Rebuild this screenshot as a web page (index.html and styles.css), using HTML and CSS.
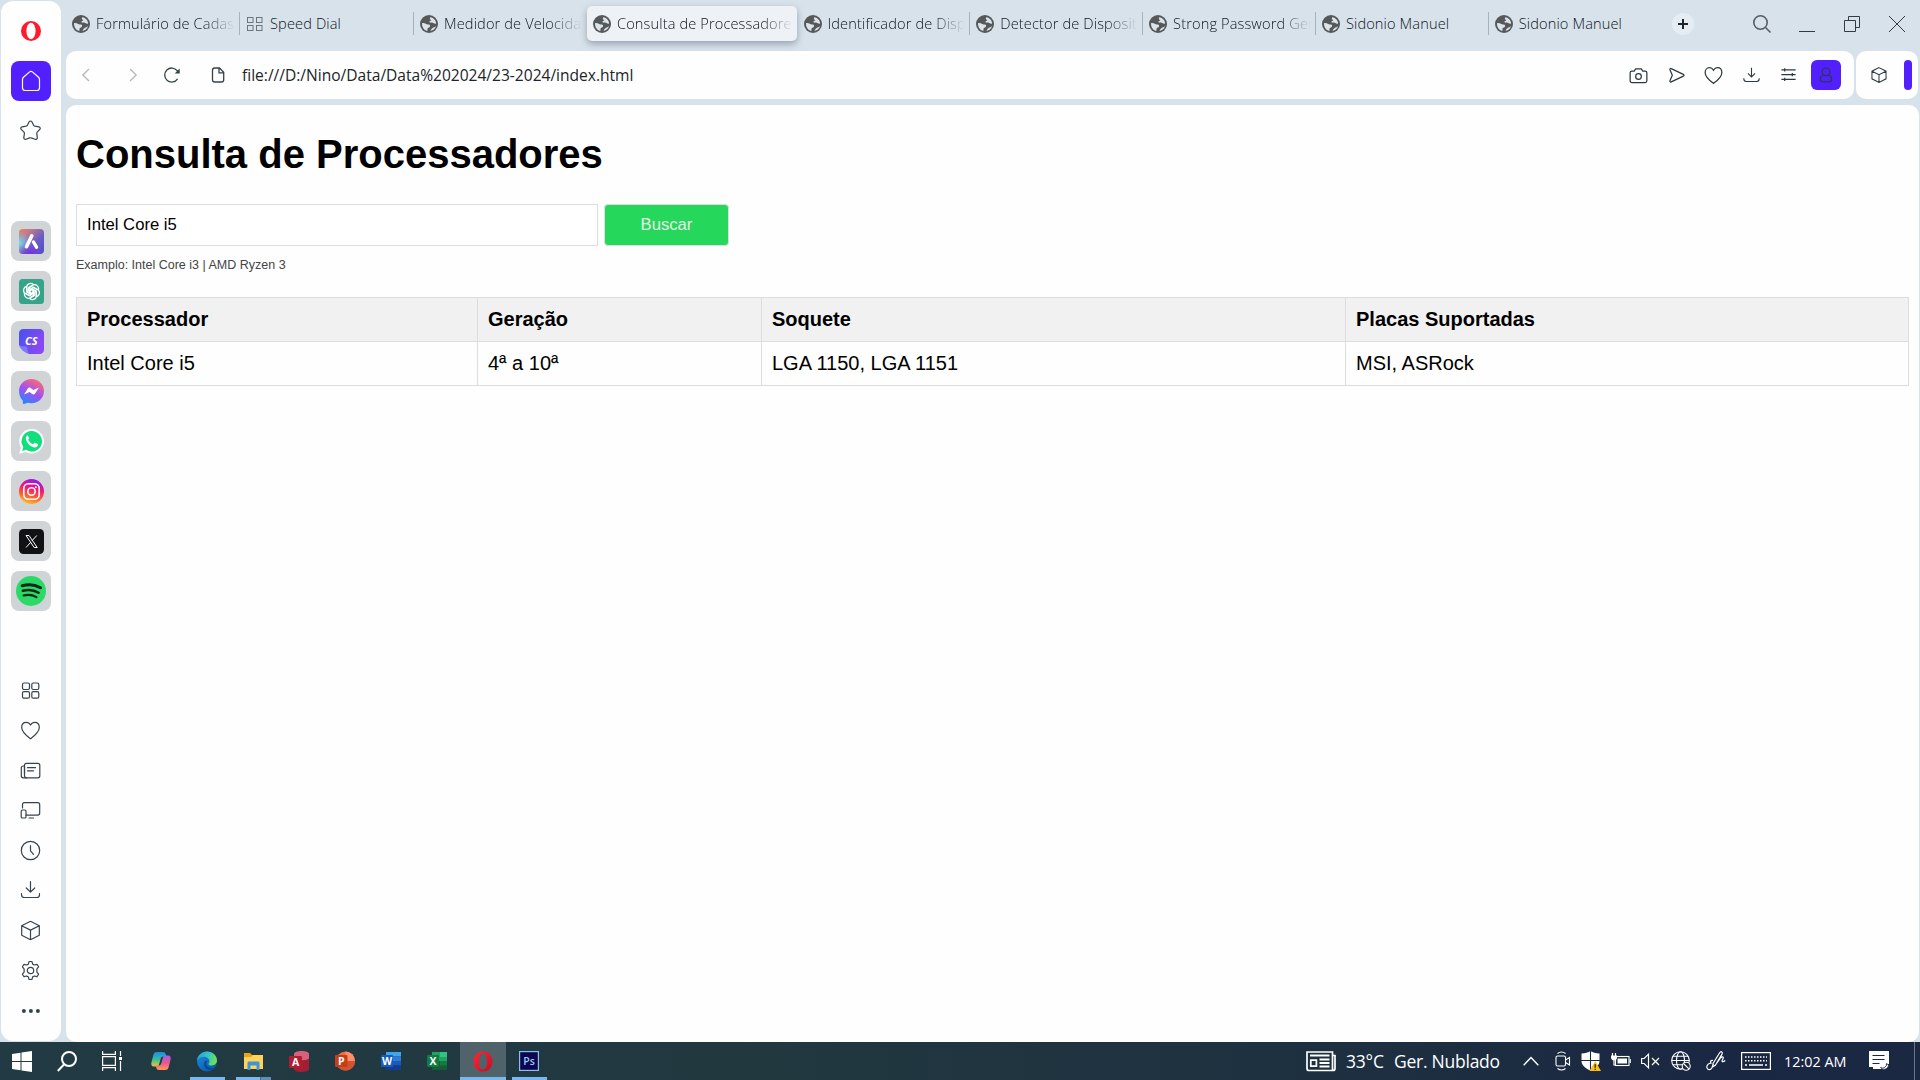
FILE: index.html
```html
<!DOCTYPE html>
<html lang="pt">
<head>
<meta charset="utf-8">
<title>Consulta de Processadores</title>
<link rel="stylesheet" href="styles.css">
</head>
<body>
<svg class="defs" aria-hidden="true">
  <defs>
    <linearGradient id="gAria" x1="0" y1="0" x2="1" y2="1"><stop offset="0" stop-color="#f5804f"/><stop offset=".25" stop-color="#c07a8c"/><stop offset=".6" stop-color="#6a5cc4"/><stop offset="1" stop-color="#4b4fc9"/></linearGradient>
    <radialGradient id="gAria2" cx="0" cy=".55" r=".5"><stop offset="0" stop-color="#6fe0f2"/><stop offset="1" stop-color="#6fc0f2" stop-opacity="0"/></radialGradient>
    <radialGradient id="gAria3" cx=".45" cy="1" r=".5"><stop offset="0" stop-color="#7a2fe0"/><stop offset="1" stop-color="#7a3fd8" stop-opacity="0"/></radialGradient>
    <linearGradient id="gCs" x1="0" y1="0" x2="1" y2=".5"><stop offset="0" stop-color="#4553ea"/><stop offset="1" stop-color="#8a48f5"/></linearGradient>
    <linearGradient id="gMsg" x1=".2" y1="1" x2=".7" y2="0"><stop offset="0" stop-color="#1a8cff"/><stop offset=".5" stop-color="#a050f0"/><stop offset="1" stop-color="#ff6a78"/></linearGradient>
    <linearGradient id="gIg" x1=".3" y1="1" x2=".6" y2="0"><stop offset="0" stop-color="#ffc423"/><stop offset=".35" stop-color="#ff5a30"/><stop offset=".65" stop-color="#f5127c"/><stop offset="1" stop-color="#8a1cf0"/></linearGradient>
    <linearGradient id="gEdge" x1="0" y1="0" x2="1" y2=".3"><stop offset="0" stop-color="#1f9de0"/><stop offset=".6" stop-color="#35c7c4"/><stop offset="1" stop-color="#6be05a"/></linearGradient>
    <linearGradient id="gEdge2" x1="0" y1="0" x2=".8" y2="1"><stop offset="0" stop-color="#1b8fdc"/><stop offset="1" stop-color="#0b57a8"/></linearGradient>
    <linearGradient id="gCopA" x1="0" y1="0" x2="0" y2="1"><stop offset="0" stop-color="#1e8be8"/><stop offset=".5" stop-color="#2fc09a"/><stop offset="1" stop-color="#f2c531"/></linearGradient>
    <linearGradient id="gCopB" x1="0" y1="0" x2="0" y2="1"><stop offset="0" stop-color="#a55ee8"/><stop offset=".5" stop-color="#e8558f"/><stop offset="1" stop-color="#ff9a55"/></linearGradient>
    <linearGradient id="gOp" x1="0" y1="0" x2="1" y2="1"><stop offset="0" stop-color="#ff2638"/><stop offset="1" stop-color="#c20f22"/></linearGradient>
  </defs>
  <symbol id="globe" viewBox="0 0 18 18"><circle cx="9" cy="9" r="9" fill="#56585a"/><path d="M10.4 2.200C13.600 2.800 16 5.500 16.100 8.400c-.8.500-1.700.4-2.300-.1-.8-.8-1.900-1-3-.7-.9.2-1.500-.2-1.300-1 .1-.7.8-.9 1.600-.9.300-.8-.2-1.100-.9-1.300-.6-.5-.4-1.600.200-2.200zM2 8.200c1.500-.3 3 .1 4.200.7.9.5 2 .4 2.900.7 1.200.4 1.300 1.900.4 2.600-.9.600-1.900.500-2 1.600-.1.900.200 1.500-.3 2.200C4 15.100 1.900 12 2 8.200z" fill="#dbe4eb"/><path d="M10.500 16c3-.5 5-2.500 5.500-5-.8.600-1.500 1.300-2.500 1.500-1.200.3-2.400 1.700-3 3.500z" fill="#dbe4eb"/></symbol>
  <symbol id="heart" viewBox="0 0 20 20"><path d="M10 18.300C7 16 1.200 11.800 1.200 7 1.200 3.800 3 1.800 5.700 1.800c1.900 0 3.400 1 4.300 2.700.9-1.700 2.400-2.700 4.300-2.700 2.700 0 4.500 2 4.500 5.200 0 4.800-5.800 9-8.800 11.300z"/></symbol>
  <symbol id="cube" viewBox="0 0 20 20"><path d="M10 .8l8.800 4.400v9.600L10 19.200l-8.800-4.400V5.200zM1.200 5.200L10 9.600l8.800-4.400M10 9.600v9.600"/></symbol>
  <symbol id="download" viewBox="0 0 20 20"><path d="M10 1v10.500M5.800 7.500L10 11.700l4.200-4.200M1 13.200v1c0 1.800 1 2.800 2.800 2.800h12.400c1.800 0 2.800-1 2.800-2.800v-1"/></symbol>
</svg>

<div class="browser">
  <nav class="sidebar">
    <svg class="opera" viewBox="0 0 20 20"><ellipse cx="10" cy="10" rx="10" ry="10" fill="#ff1b2d"/><ellipse cx="10" cy="10" rx="4.600" ry="8.300" fill="#fff"/></svg>
    <a class="home"><svg width="20" height="22" viewBox="0 0 20 22"><path d="M1.500 9.500c0-1 .4-1.800 1.200-2.500L8.600 1.900c.9-.8 1.900-.8 2.800 0L17.300 7c.8.700 1.200 1.500 1.200 2.500v8.200c0 1.800-1 2.800-2.800 2.800H4.300c-1.800 0-2.800-1-2.800-2.800z"/></svg></a>
    <svg class="line star" viewBox="0 0 22 22"><path d="M9.600 2.300c.6-1.100 2.200-1.100 2.800 0l1.700 3.400c.2.500.7.800 1.200.9l4.100.7c1.300.2 1.800 1.700.9 2.600l-2.600 2.800c-.4.400-.5.900-.4 1.400l.5 4.200c.1 1.200-1.100 2-2.200 1.500l-3.900-1.400c-.5-.2-1-.2-1.500 0l-3.700 1.400c-1.200.4-2.300-.4-2.200-1.600l.6-4.100c.1-.5-.1-1-.4-1.400L1.700 9.900c-.9-.9-.4-2.400.9-2.600l4.100-.7c.5-.1 1-.4 1.200-.9z"/></svg>

    <div class="apps">
      <a class="app"><svg viewBox="0 0 25 25"><rect width="25" height="25" rx="4" fill="url(#gAria)"/><rect width="25" height="25" rx="4" fill="url(#gAria2)"/><rect width="25" height="25" rx="4" fill="url(#gAria3)"/><path d="M12.800 6.800L7.500 17.700" stroke="#fff" stroke-width="3.600" stroke-linecap="round"/><path d="M14.500 13l3 5.200" stroke="#fff" stroke-width="3.400" stroke-linecap="round"/></svg></a>
      <a class="app"><svg viewBox="0 0 25 25"><rect width="25" height="25" rx="3.500" fill="#35a489"/><g fill="none" stroke="#fff" stroke-width="1.250"><path id="petal" d="M11 14.800l-3.400-2V8.600c0-4.300 5.300-5.400 7.200-2.400M11 14.800v-4l3.700-2.100 3.500 2"/><use href="#petal" transform="rotate(60 12.500 12.500)"/><use href="#petal" transform="rotate(120 12.500 12.500)"/><use href="#petal" transform="rotate(180 12.500 12.500)"/><use href="#petal" transform="rotate(240 12.500 12.500)"/><use href="#petal" transform="rotate(300 12.500 12.500)"/></g></svg></a>
      <a class="app"><svg viewBox="0 0 25 25"><path d="M4.500 0H20c3.500 0 5 1.500 5 5v15c0 3.500-1.500 5-5 5H10L0 16V4.500C0 1.500 1.500 0 4.500 0z" fill="url(#gCs)"/><path d="M0 16c3 2 5 1 7.500 1.500C9 18.500 8 22 10 25 6 24 1 20 0 16z" fill="#7b78ff"/><text x="12.300" y="16.300" class="cs">CS</text></svg></a>
      <a class="app"><svg viewBox="0 0 25 25"><path d="M12.500 0C19.500 0 25 5.200 25 12s-5.500 12.200-12.500 12.200c-1.300 0-2.500-.2-3.600-.5L5 25c-.9.300-1.100-.2-1.100-1l-.1-2.400C1.500 19.300 0 16 0 12 0 5.200 5.500 0 12.500 0z" fill="url(#gMsg)"/><path d="M5 15.500l3.800-6c.8-1.200 1.900-1.200 2.900-.5l2.600 2 5.700-2.600-3.900 6.200c-.8 1.200-1.900 1.200-2.900.5l-2.600-2z" fill="#fff"/></svg></a>
      <a class="app"><svg viewBox="0 0 25 25"><path d="M12.700 0a12.200 12.200 0 1 1-5.800 22.900L.2 24.800l1.800-6.400A12.200 12.200 0 0 1 12.700 0z" fill="#fff"/><path d="M12.700 2.100a10.200 10.200 0 1 1-5.500 18.700l-4 1.100 1.100-3.900A10.200 10.200 0 0 1 12.700 2.100z" fill="#0fe07c"/><path d="M8.300 6.600c-1 .7-1.700 1.900-1.400 3.400.8 4 4.300 7.600 8.500 8.400 1.500.2 3-.5 3.500-1.900.1-.6.100-1.200-.2-1.400l-2.600-1.300c-.5-.2-.9 0-1.200.5l-.8 1c-2.200-.8-3.900-2.400-4.900-4.500l.8-1c.3-.4.3-.7.100-1.100L9 6.900c-.2-.3-.5-.3-.7-.3z" fill="#fff"/></svg></a>
      <a class="app"><svg viewBox="0 0 25 25"><circle cx="12.500" cy="12.500" r="12.500" fill="url(#gIg)"/><rect x="4.800" y="4.800" width="15.400" height="15.400" rx="4.500" fill="none" stroke="#fff" stroke-width="1.600"/><circle cx="12.500" cy="12.500" r="3.700" fill="none" stroke="#fff" stroke-width="1.600"/><circle cx="16.800" cy="8.200" r="1" fill="#fff"/></svg></a>
      <a class="app"><svg viewBox="0 0 25 25"><rect width="25" height="25" rx="4.500" fill="#101214"/><path d="M7 6.500h3l8.200 12h-3zM17.800 6.500l-5 5.500M11.800 13.200L7 18.500" fill="none" stroke="#fff" stroke-width="1"/></svg></a>
      <a class="app"><svg class="big" viewBox="0 0 30 30"><circle cx="15" cy="15" r="15" fill="#2bda66"/><g fill="none" stroke="#10261a" stroke-linecap="round"><path d="M6.200 9.800c6-1.700 13-1.100 18.300 2" stroke-width="3"/><path d="M6.900 14.800c5.300-1.500 11-.9 15.700 1.900" stroke-width="2.500"/><path d="M7.500 19.500c4.500-1.200 9-.7 13 1.600" stroke-width="2.100"/></g></svg></a>
    </div>

    <div class="tools">
      <svg class="line" viewBox="0 0 20 20"><rect x="2" y="2.500" width="7" height="6.500" rx="1.500"/><rect x="11.300" y="2.500" width="7" height="6.500" rx="1.500"/><rect x="2" y="11.200" width="7" height="6.500" rx="1.500"/><rect x="11.300" y="11.200" width="7" height="6.500" rx="1.500"/></svg>
      <svg class="line"><use href="#heart"/></svg>
      <svg class="line" viewBox="0 0 20 20"><rect x="4" y="2.800" width="15.300" height="14.500" rx="2"/><path d="M4 5.500H2.800C1.500 5.500.8 6.200.8 7.500v7.800c0 1.300.7 2 2 2H6M4 5.500v7.800M7 7.200h8M7 10.300h6"/></svg>
      <svg class="line" viewBox="0 0 20 20"><path d="M2 7.500V4.200c0-1.200.8-2 2-2h13.200c1.200 0 2 .8 2 2v8.400c0 1.200-.8 2-2 2H5.500"/><rect x=".7" y="9.500" width="4.800" height="8" rx="1.300"/><path d="M8.500 17.500h4.500"/></svg>
      <svg class="line" viewBox="0 0 20 20"><circle cx="10" cy="10" r="9.200"/><path d="M10 5v5.300l3 3.500"/></svg>
      <svg class="line"><use href="#download"/></svg>
      <svg class="line"><use href="#cube"/></svg>
      <svg class="line" viewBox="0 0 20 20"><circle cx="10" cy="10" r="3.200"/><path d="M8.600 1h2.800l.8 2.600 1.700.9 2.600-.7 1.600 2.500-1.700 2v3.400l1.700 2-1.600 2.500-2.600-.7-1.700.9-.8 2.600H8.600l-.8-2.600-1.700-.9-2.600.7-1.600-2.500 1.700-2V8.300l-1.700-2 1.600-2.500 2.600.7 1.700-.9z"/></svg>
      <svg class="dots" viewBox="0 0 20 20"><circle cx="3.400" cy="10" r="2"/><circle cx="10.400" cy="10" r="2"/><circle cx="17.400" cy="10" r="2"/></svg>
    </div>
  </nav>

  <div class="main">
    <header class="tabs">
      <div class="tab"><svg class="fav"><use href="#globe"/></svg><span class="label fade">Formulário de Cadas</span></div>
      <div class="tab"><svg class="fav grid" viewBox="0 0 18 18"><rect x="1.500" y="2.500" width="5.500" height="5"/><rect x="10.500" y="2.500" width="5.500" height="5"/><rect x="1.500" y="10.500" width="5.500" height="5"/><rect x="10.500" y="10.500" width="5.500" height="5"/></svg><span class="label">Speed Dial</span></div>
      <div class="tab plain"><svg class="fav"><use href="#globe"/></svg><span class="label fade">Medidor de Velocida</span></div>
      <div class="tab active"><svg class="fav"><use href="#globe"/></svg><span class="label fade">Consulta de Processadores</span></div>
      <div class="tab"><svg class="fav"><use href="#globe"/></svg><span class="label fade">Identificador de Disp</span></div>
      <div class="tab"><svg class="fav"><use href="#globe"/></svg><span class="label fade">Detector de Disposit</span></div>
      <div class="tab"><svg class="fav"><use href="#globe"/></svg><span class="label fade">Strong Password Gen</span></div>
      <div class="tab"><svg class="fav"><use href="#globe"/></svg><span class="label">Sidonio Manuel</span></div>
      <div class="tab plain"><svg class="fav"><use href="#globe"/></svg><span class="label">Sidonio Manuel</span></div>
      <svg class="plus" viewBox="0 0 22 22"><circle cx="11" cy="11" r="11" fill="#e6edf2"/><path d="M11 6v10M6 11h10" stroke="#1d262d" stroke-width="2"/></svg>
      <div class="window">
        <svg width="18" height="18" viewBox="0 0 18 18" class="find"><circle cx="7.500" cy="7.500" r="6.700"/><path d="M12.300 12.300l5.200 5.200"/></svg>
        <svg width="16" height="16" viewBox="0 0 16 16"><path d="M0 15.500h16"/></svg>
        <svg width="16" height="16" viewBox="0 0 16 16"><path d="M.5 4.500h11v11H.5zM4.500 4V.5h11v11H12"/></svg>
        <svg width="16" height="16" viewBox="0 0 16 16"><path d="M0 0l16 16M16 0L0 16"/></svg>
      </div>
    </header>

    <div class="bars">
      <div class="address">
        <svg class="nav dim" viewBox="0 0 20 20"><path d="M13 4l-6.200 6L13 16"/></svg>
        <svg class="nav dim" viewBox="0 0 20 20"><path d="M7 4l6.200 6L7 16"/></svg>
        <svg class="nav reload" viewBox="0 0 20 20"><path d="M15.600 13.800A7 7 0 1 1 15.300 5.800L17 7.500"/><path d="M17.700 3.500v5h-5z" fill="#37424a" stroke="none"/></svg>
        <svg class="nav page" viewBox="0 0 20 20"><path d="M11.500 3H6.700C5.300 3 4.500 3.800 4.500 5.200v9.600C4.500 16.200 5.300 17 6.700 17h6.800c1.400 0 2.200-.8 2.200-2.200V7.300zM11 3v4.800h4.700"/></svg>
        <span class="url">file:///D:/Nino/Data/Data%202024/23-2024/index.html</span>
        <div class="actions">
          <svg viewBox="0 0 20 20"><path d="M3 5.300h2.500L7 3h6l1.500 2.300H17c1.200 0 1.800.7 1.800 1.900v8.300c0 1.200-.7 1.900-1.900 1.900H3.100c-1.200 0-1.900-.7-1.900-1.900V7.200c0-1.200.6-1.900 1.800-1.900z"/><circle cx="10" cy="11" r="3"/></svg>
          <svg viewBox="0 0 20 20"><path d="M4.500 2.800l12.700 6c1 .5 1 1.400 0 1.900l-12.700 6c-1 .5-1.700-.2-1.400-1.200l2.500-5.700-2.500-5.800c-.3-1 .4-1.700 1.400-1.200z"/></svg>
          <svg><use href="#heart"/></svg>
          <svg class="small"><use href="#download"/></svg>
          <svg viewBox="0 0 20 20"><path d="M2.500 4h15M2.500 9h15M2.500 14h15M6 2.300v3.400M14 7.300v3.400M6 12.300v3.400"/></svg>
          <span class="user"><svg viewBox="0 0 20 20"><circle cx="10" cy="6.500" r="4.300"/><path d="M6.500 10c-1.800 1.200-2.800 3.200-2.800 5 0 1.500 1 2.500 2.500 2.500h7.600c1.500 0 2.500-1 2.500-2.500 0-1.800-1-3.800-2.800-5"/></svg></span>
        </div>
      </div>
      <div class="extras"><svg><use href="#cube"/></svg><span class="strip"></span></div>
    </div>

    <main class="page-body">
      <h1>Consulta de Processadores</h1>
      <div class="search">
        <input type="text" value="Intel Core i5">
        <button type="button">Buscar</button>
      </div>
      <p class="hint">Examplo: Intel Core i3 | AMD Ryzen 3</p>
      <table>
        <colgroup><col class="c1"><col class="c2"><col class="c3"><col></colgroup>
        <tr><th>Processador</th><th>Geração</th><th>Soquete</th><th>Placas Suportadas</th></tr>
        <tr><td>Intel Core i5</td><td>4ª a 10ª</td><td>LGA 1150, LGA 1151</td><td>MSI, ASRock</td></tr>
      </table>
    </main>
  </div>
</div>

<footer class="taskbar">
  <div class="launch">
    <span class="task"><svg width="20" height="21" viewBox="0 0 20 21" fill="#fff"><path d="M0 3l8.500-1.300V10H0zM9.500 1.500L20 0v10H9.500zM0 11h8.500v8.200L0 18zM9.500 11H20v10l-10.500-1.500z"/></svg></span>
    <span class="task"><svg width="20" height="21" viewBox="0 0 20 21" fill="none" stroke="#fff" stroke-width="2"><circle cx="12" cy="8" r="7"/><path d="M7.200 13.300L.8 20"/></svg></span>
    <span class="task"><svg width="20" height="20" viewBox="0 0 20 20" fill="none" stroke="#fff" stroke-width="1.200"><path d="M.6 0v3.400h12.800V0M.6 20v-3.400h12.800V20M.6 5.600h12.800v8.800H.6zM18.500 0v5M18.500 10v10"/><path d="M17 6h3v3h-3z" fill="#fff" stroke="none"/></svg></span>
    <span class="task"><svg width="20" height="20" viewBox="0 0 20 20"><path d="M6 1h6c1.500 0 2.200.8 2.600 2l.8 2.500h-3c-1.500 0-2.300.8-2.800 2.500L8 13.500C7.500 15 7 15.500 5.500 15.500H3C.5 15.500-.2 13.500.5 11l2-7.500C3 1.800 4 1 6 1z" fill="url(#gCopA)"/><path d="M14 19H8c-1.500 0-2.200-.8-2.600-2l-.8-2.500h3c1.500 0 2.300-.8 2.800-2.500L12 6.500C12.500 5 13 4.500 14.500 4.500H17c2.500 0 3.200 2 2.500 4.500l-2 7.500C17 18.200 16 19 14 19z" fill="url(#gCopB)"/></svg></span>
    <span class="task run"><svg width="20" height="21" viewBox="0 0 20 20"><circle cx="10" cy="10" r="10" fill="url(#gEdge2)"/><path d="M0 9.300C.5 4 4.700 0 10 0c5.800 0 10 4.300 10 8.800 0 3.200-2.300 5.200-5.200 5.200-2.200 0-3.500-.8-3.300-1.600.2-.7.900-1 .9-2.500C12.400 7.500 10.200 5.300 7 5.300c-3.200 0-5.800 1.500-7 4z" fill="url(#gEdge)"/><path d="M7.500 10.500c-1.700 4 1.500 8 6 8 2.200 0 4-.9 5-2.500-1.800 1-4.500 1-6.300 0-2-1-3.200-2.500-3-4.300.1-1 .6-1.700 1.200-2.200-1.500-.7-2.500 0-2.900 1z" fill="#0a4b96"/></svg></span>
    <span class="task run split"><svg width="19" height="18" viewBox="0 0 19 18"><path d="M0 1h6l2 2h11v14H0z" fill="#e8a51c"/><path d="M0 5h7l2-2h10v14H0z" fill="#ffd35a"/><path d="M3.500 18v-7c0-1 .5-1.500 1.500-1.500h9c1 0 1.500.5 1.500 1.500v7h-3v-4.500h-6V18z" fill="#3d95dc"/></svg></span>
    <span class="task"><svg width="20" height="21" viewBox="0 0 20 21"><path d="M5 3c0-4 15-4 15 0v15c0 4-15 4-15 0z" fill="#a31d34"/><path d="M5 3c0-4 15-4 15 0v4c0 3-15 3-15 0z" fill="#d8607a"/><rect y="5" width="13" height="12" rx="1" fill="#b01c30"/><text class="ltr" x="6.500" y="15">A</text></svg></span>
    <span class="task"><svg width="20" height="20" viewBox="0 0 20 20"><circle cx="10.500" cy="10" r="9.500" fill="#ed6c47"/><path d="M10.500.5A9.500 9.500 0 0 1 20 10h-9.500z" fill="#ff8f6b"/><path d="M1 10h19a9.500 9.500 0 0 1-19 0z" fill="#d35230"/><rect y="4" width="12.500" height="12" rx="1" fill="#c43e1c"/><text class="ltr" x="6.300" y="14">P</text></svg></span>
    <span class="task"><svg width="20" height="20" viewBox="0 0 20 20"><path d="M5 1h15v4.500H5z" fill="#41a5ee"/><path d="M5 5.500h15V10H5z" fill="#2b7cd3"/><path d="M5 10h15v4.500H5z" fill="#185abd"/><path d="M5 14.500h15V19H5z" fill="#103f91"/><rect y="4" width="12" height="12" rx="1" fill="#185abd"/><text class="ltr" x="6" y="14">W</text></svg></span>
    <span class="task"><svg width="20" height="20" viewBox="0 0 20 20"><path d="M5 1h8v9H5z" fill="#21a366"/><path d="M13 1h7v5h-7z" fill="#33c481"/><path d="M13 6h7v4h-7z" fill="#21a366"/><path d="M5 10h15v9H5z" fill="#185c37"/><path d="M13 10h7v4.500h-7z" fill="#107c41"/><rect y="4" width="12" height="12" rx="1" fill="#107c41"/><text class="ltr" x="6" y="14">X</text></svg></span>
    <span class="task run current"><svg width="20" height="21" viewBox="0 0 20 21"><path fill-rule="evenodd" d="M10 .3c5.500 0 9.500 4.400 9.500 10.200S15.500 20.700 10 20.700.5 16.300.5 10.500 4.500.3 10 .3zm0 2.200C7.300 2.500 6 6 6 10.500s1.300 8 4 8 4-3.500 4-8-1.300-8-4-8z" fill="url(#gOp)"/></svg></span>
    <span class="task run"><svg width="20" height="20" viewBox="0 0 20 20"><rect x=".6" y=".6" width="18.800" height="18.800" fill="#0c0650" stroke="#8cbcf0" stroke-width="1.200"/><text class="ps" x="10" y="14">Ps</text></svg></span>
  </div>
  <div class="tray">
    <svg class="news" viewBox="0 0 30 21"><path d="M1 1h25.500v18.500H3c-1.300 0-2-.7-2-2zM26.500 4.500H29v13c0 1.300-.7 2-2 2h-3" stroke-width="1.700"/><path d="M4 4.500h19.500M13.500 8.500h10M13.500 12h10M13.500 15.500h10" stroke-width="1.800"/><path d="M4.800 9.200h5.600v6H4.800z" stroke-width="1.700"/></svg>
    <span class="temp">33°C</span><span class="sky">Ger. Nublado</span>
    <svg class="t-caret" viewBox="0 0 16 10"><path d="M.7 9.200L8 1.500l7.300 7.700" stroke-width="1.400"/></svg>
    <svg class="t-cam" viewBox="0 0 16 20"><rect x="1" y="5" width="9.500" height="10" rx="1.500"/><path d="M10.500 9L14.500 6.500v7.500l-4-2.500M2.500 2.500C5 .6 8 .6 10.500 2.500M2.500 17.500c2.500 1.900 5.500 1.900 8 0"/></svg>
    <svg class="t-shield" viewBox="0 0 20 20"><path d="M9.500 0C11.500 1.500 15 2.500 18.500 2.500V10c0 4-4 7.500-9 9.500-5-2-9-5.500-9-9.500V2.500C4 2.500 7.500 1.500 9.500 0z" fill="#fff" stroke="none"/><path d="M9.500 0v20M0 9.500h19" stroke="#1b2a40"/><path d="M14.200 10L20 20H8.500z" fill="#ffbf12" stroke="none"/><path d="M14.200 13.300v3.500M14.200 17.700v1.300" stroke="#222" stroke-width="1.300"/></svg>
    <svg class="t-bat" viewBox="0 0 20 16"><rect x="4.500" y="3.500" width="13.500" height="9"/><path d="M6.500 5.500h9.500v5H6.500z" fill="#fff" stroke="none"/><path d="M19.200 6v4M1.500 0v3M4.500 0v3M3 7v5h2" stroke-width="1.200"/><path d="M0 2.500h6v2c0 1.500-1 3-3 3s-3-1.500-3-3z" fill="#fff" stroke="none"/></svg>
    <svg class="t-mute" viewBox="0 0 19 16"><path d="M.6 5.500h2.600L7.500 1.200v13.600L3.200 10.500H.6zM11 5l7 7M18 5l-7 7" stroke-width="1.200"/></svg>
    <svg class="t-net" viewBox="0 0 20 20"><circle cx="9.500" cy="9.500" r="8.800"/><ellipse cx="9.500" cy="9.500" rx="4" ry="8.800"/><path d="M.7 9.500h17.600M1.800 5.200h15.400M1.800 13.800h10"/><circle cx="15.200" cy="15.200" r="4" fill="#1b2842"/><path d="M12.500 12.500l5.400 5.400"/></svg>
    <svg class="t-pen" viewBox="0 0 20 20"><path d="M7 12.500L13.500 2c.8-1.200 1.500-1.600 2.300-1.100.8.500.8 1.300.1 2.500L9.300 14.200l-2.600 1.600zM7 9.500c-2.500-.6-3.500 2-1.500 2.800M5.500 12.300C2.500 12 .5 14 .8 16.500c.4 2.500 3.700 2.800 5 .5l1.700-4M10 13l5-6.500c1.500-1.500 3-.3 2 1.200-1 1.700-1.500 3 0 3 1 0 1.700-.7 2.200-1.200" stroke-width="1.200"/></svg>
    <svg class="t-key" viewBox="0 0 30 20"><rect x=".6" y="1.600" width="28.800" height="16.800" stroke-width="1.200"/><path d="M4 6h22M4 9.800h22" stroke-width="1.500" stroke-dasharray="1.500 1.500"/><path d="M4 14h2M8 14h14M24 14h2" stroke-width="1.300"/></svg>
    <span class="time">12:02 AM</span>
    <svg class="t-note" viewBox="0 0 20 20"><path d="M0 0h20v13h-3v5H4l0-2H0z" fill="#fff" stroke="none"/><path d="M3.500 4.500h12M3.500 8.500h12M3.500 12.500h7" stroke="#1b2842" stroke-width="1.200"/><path d="M17.500 12.500a4 4 0 0 1-6 4 4.500 4.500 0 0 0 8-1.500c0-1-.8-2-2-2.500z" fill="#fff" stroke="#1b2842" stroke-width=".8"/></svg>
    <span class="peek"></span>
  </div>
</footer>
</body>
</html>
```
FILE: styles.css
```css
* { box-sizing: border-box; }

body {
  margin: 0;
  width: 1920px;
  height: 1080px;
  overflow: hidden;
  display: flex;
  flex-direction: column;
  background: #d8e2ea;
  font-family: "Liberation Sans", Arial, sans-serif;
}

svg { display: block; flex: none; overflow: visible; }
.defs { position: absolute; width: 0; height: 0; }

.browser { display: flex; height: 1042px; padding-left: 1px; gap: 5px; }

/* sidebar */
.sidebar {
  width: 60px;
  height: 1040px;
  margin-top: 1px;
  padding-top: 20px;
  border-radius: 12px;
  background: #fefefe;
  display: flex;
  flex-direction: column;
  align-items: center;
}
.opera { width: 20px; height: 20px; }
.home {
  width: 40px;
  height: 40px;
  margin-top: 20px;
  border-radius: 8px;
  background: #521fff;
  display: flex;
  align-items: center;
  justify-content: center;
}
.home svg { fill: none; stroke: #fff; stroke-width: 1.2; }
.line { width: 20px; height: 20px; fill: none; stroke: #37434c; stroke-width: 1.2; stroke-linejoin: round; stroke-linecap: round; transform: translate(-.5px, -.5px); }
.sidebar .star { width: 22px; height: 22px; margin-top: 19px; }
.apps { margin-top: 79px; display: flex; flex-direction: column; gap: 10px; }
.app {
  width: 40px;
  height: 40px;
  border-radius: 8px;
  background: #d0d4d7;
  display: flex;
  align-items: center;
  justify-content: center;
}
.app svg { width: 25px; height: 25px; }
.app .big { width: 30px; height: 30px; }
.cs { font: italic bold 11px "Open Sans", sans-serif; fill: #fff; text-anchor: middle; }
.tools { margin-top: 70px; display: flex; flex-direction: column; gap: 20px; }
.dots { width: 20px; height: 20px; fill: #37434c; transform: translate(-.5px, 0); }

/* tab strip */
.main { flex: 1; display: flex; flex-direction: column; min-width: 0; }
.tabs { height: 51px; display: flex; align-items: flex-start; padding-top: 6px; }
.tab {
  width: 173px;
  height: 35px;
  padding: 0 5px 0 6px;
  display: flex;
  align-items: center;
  gap: 6px;
  flex: none;
  position: relative;
}
.tab:nth-child(n+5) { width: 172.8px; }
.tab::after { content: ""; position: absolute; right: 0; top: 6px; width: 1px; height: 23px; background: #a8b2ba; }
.tab:first-child, .tab:nth-child(2) { width: 174px; }
.tab.plain::after, .tab.active::after { display: none; }
.tab.active {
  width: 210px;
  padding-right: 4px;
  margin-right: .5px;
  border-radius: 5px;
  background: #eef1f6;
  box-shadow: 0 3px 7px rgba(60, 75, 95, .42);
}
.fav { width: 18px; height: 18px; }
.fav.grid { fill: none; stroke: #6c757c; stroke-width: 1; }
.label {
  flex: 1;
  min-width: 0;
  overflow: hidden;
  white-space: nowrap;
  margin-top: -2px;
  font: 300 14.6px/22px "Open Sans", sans-serif;
  letter-spacing: .12px;
  color: #0c151c;
}
.fade {
  -webkit-mask-image: linear-gradient(90deg, #000 calc(100% - 32px), transparent);
  mask-image: linear-gradient(90deg, #000 calc(100% - 32px), transparent);
}
.plus { width: 22px; height: 22px; margin: 7px 0 0 11px; }
.window {
  margin: 9px 15px 0 auto;
  display: flex;
  gap: 29px;
  align-items: flex-start;
  fill: none;
  stroke: #333b41;
}
.window svg { margin-top: 1px; }
.window .find { margin: 0 -1px 0 0; stroke-width: 1.6; stroke: #565d63; }

/* address bar */
.bars { display: flex; gap: 2px; height: 48px; }
.address {
  width: 1788px;
  border-radius: 10px;
  background: #fefefe;
  display: flex;
  align-items: center;
  padding: 0 13px 0 10px;
}
.nav { width: 20px; height: 20px; fill: none; stroke: #37424a; stroke-width: 1.3; margin-right: 27px; }
.nav.dim { stroke: #b4b8bb; }
.nav.reload { margin: 0 26px 0 -8px; }
.nav.page { margin: 0 14px 0 0; }
.url { font: 400 15.55px/24px "Open Sans", sans-serif; color: #202427; white-space: nowrap; }
.actions { margin-left: auto; display: flex; align-items: center; gap: 18.5px; fill: none; stroke: #2d3840; stroke-width: 1.3; }
.actions svg { width: 19px; height: 19px; }
.actions .small { width: 17px; height: 17px; margin: 0 1px; }
.user {
  width: 30px;
  height: 30px;
  margin-left: -5.5px;
  border-radius: 6px;
  background: #521fff;
  display: flex;
  align-items: center;
  justify-content: center;
}
.user svg { width: 18px; height: 18px; }
.extras {
  width: 62px;
  border-radius: 10px;
  background: #fefefe;
  display: flex;
  align-items: center;
  justify-content: space-between;
  padding: 0 6px 0 15px;
  fill: none;
  stroke: #2d3840;
  stroke-width: 1.3;
}
.extras svg { width: 16px; height: 16px; }
.strip { width: 8px; height: 30px; border-radius: 4px; background: #521fff; }

/* document */
.page-body {
  margin: 6px 1px 0 0;
  flex: 1;
  padding: 0 9px 0 10px;
  border-radius: 10px;
  background: #fefefe;
  overflow: hidden;
}
h1 { margin: 26px 0 0; font-size: 40px; line-height: 46px; color: #000; }
.search { display: flex; gap: 6px; margin-top: 27px; }
input, button { height: 42px; font: 16.67px "Liberation Sans", Arial, sans-serif; border: 1px solid #ddd; }
input { width: 522px; padding: 0 10px; background: #fff; color: #000; outline: none; }
button { width: 125px; border-radius: 4px; background: #25d75b; color: #e6f0e8; }
.hint { margin: 12px 0 0; font-size: 12.5px; line-height: 15px; color: #444; }
table { margin-top: 24px; width: 1833px; border-collapse: collapse; table-layout: fixed; font-size: 20px; line-height: 23px; color: #000; }
.c1 { width: 401px; }
.c2 { width: 284px; }
.c3 { width: 584px; }
th, td { height: 44px; padding: 0 10px; border: 1px solid #ddd; text-align: left; }
th { background: #f1f1f1; }

/* taskbar */
.taskbar {
  height: 38px;
  display: flex;
  justify-content: space-between;
  background: linear-gradient(90deg, #223a43 0%, #21383f 40%, #1d2f40 72%, #1a2743 90%, #1b2842 100%);
}
.launch { display: flex; }
.task { width: 46px; height: 38px; display: flex; align-items: center; justify-content: center; position: relative; }
.task:first-child { width: 44px; }
.task:nth-child(2), .task:nth-child(3) { width: 45px; }
.task:nth-child(4) { width: 53px; padding-left: 1px; }
.task:nth-child(5) { width: 43px; padding-right: 3px; }
.task.run::after { content: ""; position: absolute; left: 6px; right: 5px; bottom: 0; height: 3px; background: #76b9ed; }
.task:nth-child(5)::after { left: 3px; right: 5px; }
.task.split::after { background: linear-gradient(90deg, #76b9ed 24px, #2c4b5c 24px, #5f8fb8 25px); }
.task.current { background: #50626a; }
.task.current::after { left: 0; right: 0; }
.ltr { font: bold 10.5px "Open Sans", sans-serif; fill: #fff; text-anchor: middle; stroke: none; }
.ps { font: 600 10.5px "Open Sans", sans-serif; fill: #9cc8f5; text-anchor: middle; stroke: none; }

.tray { display: flex; align-items: center; color: #fff; font-family: "Open Sans", sans-serif; white-space: nowrap; fill: none; stroke: #fff; stroke-width: 1.1; }
.news { width: 30px; height: 21px; margin-right: 10px; }
.temp { width: 48px; font-size: 17.5px; letter-spacing: -.2px; }
.sky { width: 129px; font-size: 17.5px; letter-spacing: -.25px; }
.t-caret { width: 16px; height: 10px; margin-right: 16px; }
.t-cam { width: 16px; height: 20px; margin-right: 10px; }
.t-shield { width: 20px; height: 20px; margin-right: 10px; }
.t-bat { width: 20px; height: 16px; margin-right: 10px; }
.t-mute { width: 19px; height: 16px; margin-right: 11px; }
.t-net { width: 20px; height: 20px; margin-right: 15px; }
.t-pen { width: 20px; height: 20px; margin-right: 15px; }
.t-key { width: 30px; height: 20px; margin-right: 13px; }
.time { width: 85px; font-size: 14.4px; }
.t-note { width: 20px; height: 20px; margin-right: 25px; }
.peek { width: 6px; height: 38px; border-left: 1px solid #6b7688; }
```
